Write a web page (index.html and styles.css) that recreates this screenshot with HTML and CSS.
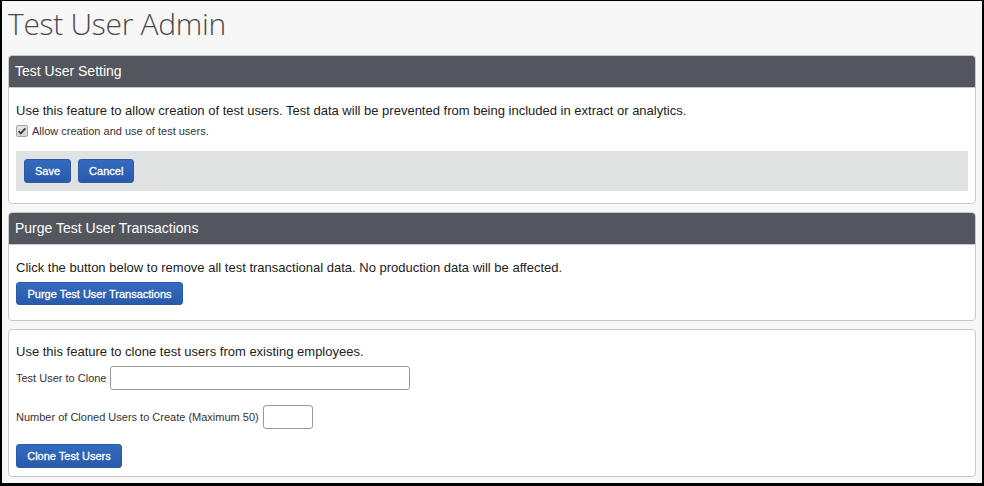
FILE: index.html
```html
<!DOCTYPE html>
<html>
<head>
<meta charset="utf-8">
<link rel="stylesheet" href="styles.css">
</head>
<body>
<div class="frame">
  <h1 class="title">Test User Admin</h1>

  <section class="panel">
    <div class="panel-head">Test User Setting</div>
    <div class="panel-body p1">
      <p class="lead">Use this feature to allow creation of test users. Test data will be prevented from being included in extract or analytics.</p>
      <label class="check"><input type="checkbox" checked class="check-input"><span class="check-box"><svg viewBox="0 0 12 12" width="10" height="10"><path d="M2 6.2 L4.6 8.8 L10 2.8" fill="none" stroke="#3a3a3a" stroke-width="2.2"/></svg></span> Allow creation and use of test users.</label>
      <div class="actions">
        <button class="btn">Save</button>
        <button class="btn">Cancel</button>
      </div>
    </div>
  </section>

  <section class="panel">
    <div class="panel-head">Purge Test User Transactions</div>
    <div class="panel-body p2">
      <p class="lead">Click the button below to remove all test transactional data. No production data will be affected.</p>
      <button class="btn btn-wide">Purge Test User Transactions</button>
    </div>
  </section>

  <section class="panel">
    <div class="panel-body p3">
      <p class="lead">Use this feature to clone test users from existing employees.</p>
      <div class="field">
        <label class="field-label">Test User to Clone</label>
        <input type="text" class="input input-long">
      </div>
      <div class="field field-2">
        <label class="field-label">Number of Cloned Users to Create (Maximum 50)</label>
        <input type="text" class="input input-short">
      </div>
      <button class="btn btn-clone">Clone Test Users</button>
    </div>
  </section>
</div>
</body>
</html>
```

FILE: styles.css
```css
html, body {
  margin: 0;
  padding: 0;
  background: #000;
}
body {
  width: 984px;
  height: 486px;
  overflow: hidden;
  font-family: "Liberation Sans", Arial, sans-serif;
  color: #222;
}
.frame {
  box-sizing: border-box;
  height: 482px;
  margin: 1px 2px 0 2px;
  background: #f7f7f7;
  padding: 0 6px 0 6px;
}
.title {
  margin: 0;
  padding: 4px 0 0 0;
  height: 54px;
  box-sizing: border-box;
  font-family: "Open Sans", "Lato", sans-serif;
  font-weight: 300;
  font-size: 30px;
  line-height: 38px;
  color: #4a4a4a;
  letter-spacing: -0.3px;
}
.panel {
  background: #fff;
  border: 1px solid #c9c9c9;
  border-radius: 4px;
  margin-bottom: 8px;
  overflow: hidden;
}
.panel-head {
  background: #53565c;
  color: #fff;
  height: 32px;
  line-height: 31px;
  padding: 0 6px;
  font-size: 14px;
  border-bottom: 1px solid #c9c9c9;
  box-sizing: border-box;
}
.panel-body {
  padding: 0 7px;
}
.lead {
  margin: 0;
  font-size: 13px;
  line-height: 20px;
  color: #222;
}
.p1 { padding-top: 13px; padding-bottom: 12px; }
.check {
  display: flex;
  align-items: center;
  gap: 4px;
  font-size: 11px;
  color: #333;
  height: 18px;
  margin-top: 1px;
}
.check-input {
  position: absolute;
  opacity: 0;
  width: 0;
  height: 0;
  margin: 0;
}
.check-box {
  box-sizing: border-box;
  width: 12px;
  height: 12px;
  border: 1px solid #a6a6a6;
  border-radius: 2px;
  background: linear-gradient(#e6e6e6, #d4d4d4);
  display: flex;
  align-items: center;
  justify-content: center;
}
.actions {
  margin-top: 11px;
  background: #e1e2e2;
  height: 40px;
  padding: 0 8px;
  display: flex;
  align-items: center;
  gap: 7px;
}
.btn {
  font-family: "Liberation Sans", Arial, sans-serif;
  font-size: 11px;
  font-weight: normal;
  -webkit-text-stroke: 0.3px #fff;
  color: #fff;
  background: linear-gradient(#346bbf, #2a5aaa);
  border: 1px solid #2a5aa8;
  border-radius: 3px;
  height: 24px;
  padding: 0 10px;
  cursor: pointer;
}
.p2 { padding-top: 13px; padding-bottom: 15px; }
.btn-wide {
  display: block;
  margin-top: 4px;
  height: 23px;
  width: 167px;
  padding: 0;
}
.p3 { padding-top: 12px; padding-bottom: 8px; }
.field {
  display: flex;
  align-items: center;
  gap: 4px;
  margin-top: 4px;
}
.field-2 { margin-top: 15px; }
.field-label {
  font-size: 11px;
  color: #333;
}
.input {
  box-sizing: border-box;
  height: 24px;
  border: 1px solid #999;
  border-radius: 3px;
  background: #fff;
  margin: 0;
}
.input-long { width: 300px; }
.input-short { width: 50px; }
.btn-clone {
  display: block;
  margin-top: 15px;
  width: 106px;
  padding: 0;
}
```
